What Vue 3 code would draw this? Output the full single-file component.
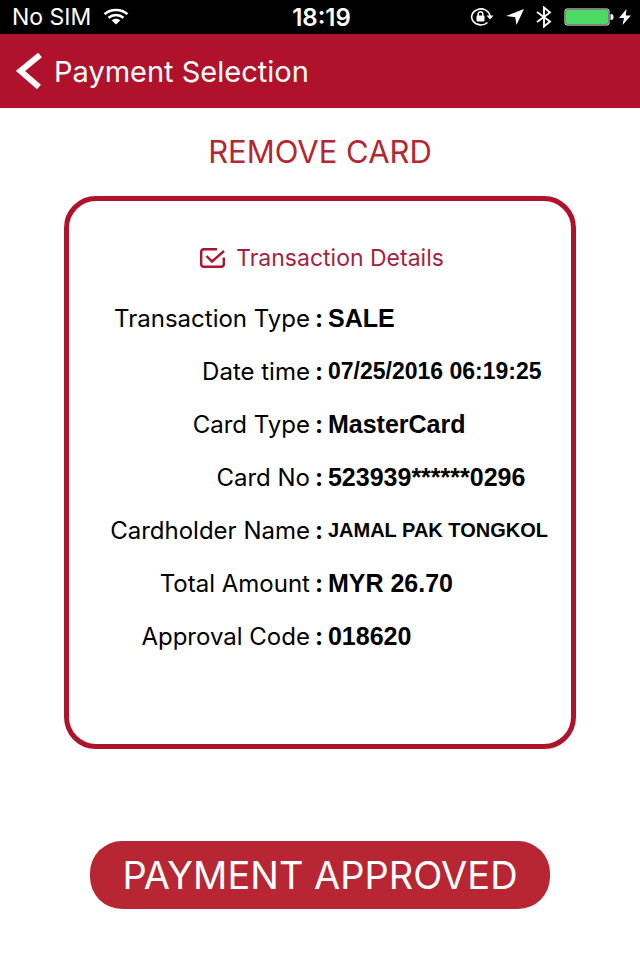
<script setup>
import { ref } from 'vue'

const details = ref([
    { label: 'Transaction Type', value: 'SALE' },
    { label: 'Date time', value: '07/25/2016 06:19:25', size: 'medium' },
    { label: 'Card Type', value: 'MasterCard' },
    { label: 'Card No', value: '523939******0296' },
    { label: 'Cardholder Name', value: 'JAMAL PAK TONGKOL', size: 'small' },
    { label: 'Total Amount', value: 'MYR 26.70' },
    { label: 'Approval Code', value: '018620' },
])
</script>

<template>
    <div class="screen">
        <!-- status bar -->
        <div class="status-bar">
            <div class="status-left">
                <span>No SIM</span>
                <svg width="26" height="18" viewBox="0 0 26 18" fill="none" stroke="#fff">
                    <path d="M1.500 6.200C8 .6 18 .6 24.500 6.200" stroke-width="2.400" />
                    <path d="M5.500 9.700C10 6 16 6 20.500 9.700" stroke-width="2.400" />
                    <path d="M8.600 12.300C11 10.200 15 10.200 17.400 12.300L13 16.500Z" fill="#fff" stroke="none" />
                </svg>
            </div>
            <time class="status-time">18:19</time>
            <div class="status-right">
                <svg width="24" height="20" viewBox="0 0 24 20" fill="none" stroke="#fff">
                    <path d="M17.500 15.500A9.200 8 0 1 1 20 9" stroke-width="1.600" />
                    <path d="M16.500 8.500H23.500L20 12.500Z" fill="#fff" stroke="none" />
                    <rect x="6.500" y="8.500" width="8" height="6" rx="1" fill="#fff" stroke="none" />
                    <path d="M8.200 9V7a2.300 2.300 0 0 1 4.600 0V9" stroke-width="1.500" />
                </svg>
                <svg width="18" height="16" viewBox="0 0 18 16" fill="#fff">
                    <path d="M18 0L10.500 16L9.200 8.200L0 7Z" />
                </svg>
                <svg width="16" height="22" viewBox="0 0 16 22" fill="none" stroke="#fff" stroke-width="1.900">
                    <path d="M1 6L14 15.500L8 20.500V1.500L14 6.500L1 16" />
                </svg>
                <svg width="50" height="18" viewBox="0 0 50 18">
                    <rect x="1" y="1" width="44" height="16" rx="2" fill="none" stroke="#fff" />
                    <rect x="2" y="2" width="42" height="14" rx="1" fill="#4cd964" />
                    <path d="M46.500 6H47a2.500 3 0 0 1 0 6H46.500Z" fill="#fff" />
                </svg>
                <svg width="12" height="16" viewBox="0 0 12 16" fill="#fff">
                    <path d="M7.500 0L0 9H5L3.500 16L12 6.500H6.800Z" />
                </svg>
            </div>
        </div>

        <!-- header -->
        <header class="nav-bar">
            <button type="button" class="back-btn">
                <svg width="26" height="36" viewBox="0 0 26 36" fill="none" stroke="#fff" stroke-width="6">
                    <path d="M24 2L4.500 18L23 34" />
                </svg>
                <span>Payment Selection</span>
            </button>
        </header>

        <main class="content">
            <h1 class="title">REMOVE CARD</h1>

            <section class="card">
                <h2 class="card-title">
                    <svg width="26" height="20" viewBox="0 0 26 20" fill="none" stroke="#a81632" stroke-width="2.400">
                        <path d="M17 1.200H4Q1.200 1.200 1.200 4V16Q1.200 18.800 4 18.800H21Q23.800 18.800 23.800 16V9.500" />
                        <path d="M6.500 8L12 13.500L24 3" />
                    </svg>
                    <span>Transaction Details</span>
                </h2>

                <dl class="details">
                    <div v-for="item in details" :key="item.label" class="row">
                        <dt>{{ item.label }}</dt>
                        <dd class="colon">:</dd>
                        <dd class="value" :class="item.size">{{ item.value }}</dd>
                    </div>
                </dl>
            </section>

            <button type="button" class="approve-btn">PAYMENT APPROVED</button>
        </main>
    </div>
</template>

<style>
body {
    margin: 0;
    background-color: #fff;
}
</style>

<style scoped>
.screen {
    min-height: 100vh;
    display: flex;
    flex-direction: column;
    background-color: #fff;
    color: #000;
    font-family: Inter, 'Liberation Sans', sans-serif;
}

svg {
    display: block;
    flex: none;
}

/* ===== status bar ===== */
.status-bar {
    display: grid;
    grid-template-columns: 1fr auto 1fr;
    align-items: center;
    height: 34px;
    padding: 0 9px 0 12px;
    background-color: #000;
    color: #fff;
    font-size: 23px;
}

.status-left {
    display: flex;
    align-items: center;
    gap: 12px;
}

.status-time {
    font-size: 24px;
    font-weight: 600;
}

.status-right {
    display: flex;
    align-items: center;
    justify-content: flex-end;
    gap: 12px;
}

.status-right svg:last-child {
    margin-left: -7px;
}

/* ===== header ===== */
.nav-bar {
    display: flex;
    height: 74px;
    background-color: #b0122b;
}

.back-btn {
    display: flex;
    align-items: center;
    gap: 12px;
    padding: 0 16px;
    border: none;
    background: none;
    color: #fff;
    font-family: inherit;
    font-size: 29px;
    cursor: pointer;
}

/* ===== content ===== */
.content {
    flex: 1;
    display: flex;
    flex-direction: column;
    align-items: center;
}

.title {
    margin: 26px 0;
    color: #b52633;
    font-size: 31px;
    font-weight: 400;
    line-height: 36px;
}

.card {
    box-sizing: border-box;
    width: 80%;
    padding: 43px 0 81px;
    border: 5px solid #b0122b;
    border-radius: 32px;
}

.card-title {
    display: flex;
    align-items: center;
    justify-content: center;
    gap: 10px;
    margin: 0 0 20px;
    padding-left: 4px;
    color: #a81f3d;
    font-size: 23px;
    font-weight: 400;
    line-height: 28px;
}

.details {
    margin: 0;
}

.row {
    display: grid;
    grid-template-columns: 48% 18px 1fr;
    align-items: center;
    height: 53px;
}

dt {
    font-size: 24px;
    text-align: right;
    white-space: nowrap;
}

dd {
    margin: 0;
    font-weight: 700;
}

.colon {
    font-size: 24px;
    text-align: center;
}

.value {
    font-family: 'Liberation Sans', Arial, sans-serif;
    font-size: 25px;
    white-space: nowrap;
}

.value.medium {
    font-size: 23px;
}

.value.small {
    font-size: 20px;
}

/* ===== button ===== */
.approve-btn {
    width: 72%;
    height: 68px;
    margin: 92px 0 48px;
    padding: 0;
    border: none;
    border-radius: 32px;
    background-color: #b72632;
    color: #fff;
    font-family: inherit;
    font-size: 38px;
    cursor: pointer;
}
</style>
